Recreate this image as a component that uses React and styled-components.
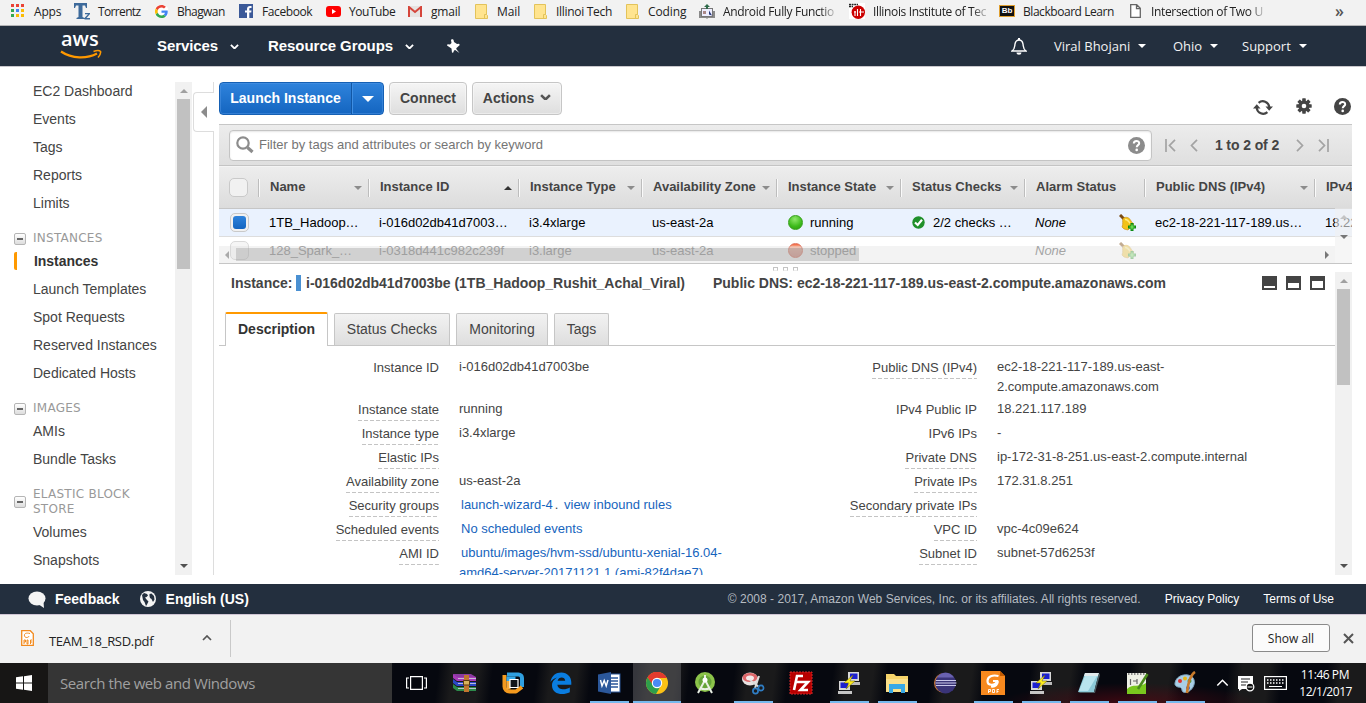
import React from 'react';
import styled, { createGlobalStyle, css } from 'styled-components';

const Global = createGlobalStyle`
  * { box-sizing: border-box; }
  body { margin: 0; background: #fff; overflow: hidden; }
  svg { display: block; flex: none; }
`;
const sans = css`font-family: "Liberation Sans", Arial, sans-serif;`;
const segoe = css`font-family: "Open Sans", "Noto Sans", sans-serif;`;

const Page = styled.div`
  ${sans}
  width: 1366px; height: 703px; display: flex; flex-direction: column;
  color: #444; background: #fff; overflow: hidden; white-space: nowrap;
`;

/* ---------- bookmarks ---------- */
const Bookmarks = styled.div`
  ${segoe}
  height: 26px; flex: none; display: flex; padding-left: 9px;
  background: #f2f2f2; border-bottom: 1px solid #b4b4b6;
  font-size: 12px; color: #222;
`;
const Bookmark = styled.div`
  width: ${p => p.$w}px; height: 22px; flex: none; display: flex; align-items: center; gap: 7px;
  letter-spacing: ${p => p.$ls || 0}px;
`;
const BmIcon = styled.span`width: 18px; flex: none; display: flex; justify-content: center;`;
const BmText = styled.span`
  ${p => p.$fade && css`mask-image: linear-gradient(90deg, #000 88%, rgba(0,0,0,.25));`}
`;
const More = styled.span`margin-left: auto; margin-right: 22px; line-height: 22px; font-size: 16px; font-weight: 600; color: #555;`;
const BbLogo = styled.span`
  width: 16px; height: 12px; background: #111; border: 1px solid #e0a030; color: #fff;
  font: bold 8px/10px "Liberation Sans", sans-serif; text-align: center; letter-spacing: 0;
`;

/* ---------- AWS navigation ---------- */
const Nav = styled.header`
  height: 41px; flex: none; display: flex; align-items: center; background: #232f3e;
  border-bottom: 1px solid #c9c7cc; color: #fff; padding-left: 60px;
`;
const Logo = styled.div`
  ${segoe}
  width: 97px; height: 40px; padding-top: 3px; font-size: 20px; line-height: 20px; font-weight: 600;
  letter-spacing: 0;
  span { display: block; padding-left: 1px; height: 20px; }
`;
const NavMain = styled.div`
  display: flex; align-items: center; gap: ${p => p.$gap || 12}px; width: ${p => p.$w}px; padding-bottom: 2px;
  font-size: 15px; font-weight: bold; letter-spacing: ${p => p.$ls || 0}px;
  svg { margin-top: 3px; }
`;
const NavSide = styled.div`
  ${segoe}
  display: flex; align-items: center; gap: 8px; width: ${p => p.$w}px;
  font-size: 13px; font-weight: 500; color: #f2f2f2; letter-spacing: ${p => p.$ls || 0}px;
`;
const Caret = styled.i`
  width: 0; height: 0; flex: none; border: ${p => p.$s || 4}px solid transparent; border-bottom: 0;
  border-top-color: ${p => p.$c || '#fff'};
  ${p => p.$up && css`transform: rotate(180deg);`}
`;
const Spacer = styled.div`flex: 1;`;

/* ---------- body ---------- */
const Body = styled.main`height: 517px; flex: none; display: flex; padding: 15px 0 9px;`;
const Sidebar = styled.nav`width: 175px; height: 493px; overflow: hidden; flex: none;`;
const Item = styled.div`
  height: 18px; line-height: 18px; margin-bottom: 10px; padding-left: 33px; font-size: 14px;
  ${p => p.$on && css`
    font-weight: bold; padding-left: 17px; margin-left: 14px; border-left: 3px solid #f90;
    border-radius: 2px 0 0 2px; color: #333; letter-spacing: -0.05px;
  `}
`;
const Section = styled.div`
  display: flex; align-items: center; gap: 7px; padding: 9px 0 6px 14px;
  font: 12px/15px "DejaVu Sans", Verdana, sans-serif; color: #999; white-space: pre-line;
  letter-spacing: 0.25px;
`;
const Minus = styled.i`
  width: 12px; height: 12px; flex: none; border: 1px solid #b5b5b5; border-radius: 2px;
  background: linear-gradient(#666, #666) center / 6px 2px no-repeat, linear-gradient(#fff, #ddd);
`;
const Track = styled.div`
  width: 17px; flex: none; height: ${p => p.$h}px; background: #f1f1f1;
  display: flex; flex-direction: column; align-items: center; justify-content: space-between;
  padding: 7px 0;
`;
const Thumb = styled.div`width: 13px; height: ${p => p.$h}px; background: #c1c1c1; margin: 6px 0 auto;`;
const Divider = styled.div`
  width: 22px; height: 493px; flex: none; display: flex; flex-direction: column; align-items: flex-end;
`;
const Line = styled.div`width: 1px; height: ${p => p.$h}px; background: #ddd;`;
const Handle = styled.div`
  width: 21px; height: 40px; border: 1px solid #ddd; border-right: 0; border-radius: 4px 0 0 4px;
  display: flex; align-items: center; padding-left: 7px;
`;
const LeftTri = styled.i`border: 6px solid transparent; border-right-color: #8c8c8c; border-left: 0;`;

const Main = styled.section`width: 1133px; margin-left: 5px; height: 493px; flex: none; display: flex; flex-direction: column;`;
const Toolbar = styled.div`height: 42px; flex: none; display: flex; align-items: flex-start;`;
const Split = styled.div`
  height: 33px; width: 165px; display: flex; border: 1px solid #1560b4; border-radius: 4px; margin-right: 5px;
  background: linear-gradient(#2f83dc, #1465c0); color: #fff; font-weight: bold; font-size: 14px;
  box-shadow: inset 0 0 0 1px rgba(80,150,230,.5);
`;
const SplitText = styled.span`width: 132px; line-height: 31px; text-align: center; border-right: 1px solid #1257a5;`;
const SplitArrow = styled.span`
  flex: 1; display: flex; align-items: center; justify-content: center; border-left: 1px solid #3f8ee2;
`;
const Button = styled.button`
  ${sans}
  height: 33px; width: ${p => p.$w}px; margin-right: 5px; padding: 0 0 1px; border: 1px solid #c6c6c6; border-radius: 4px;
  background: linear-gradient(#f5f5f5, #dedede); color: #444; font-weight: bold; font-size: 14px;
  box-shadow: inset 0 0 0 1px rgba(255,255,255,.4);
  display: flex; align-items: center; justify-content: center; gap: 6px;
  svg { margin-top: -2px; }
`;
const Tools = styled.div`
  margin-left: auto; margin-right: 1px; display: flex; align-items: flex-start; gap: 22px; padding-top: 16px;
  svg:first-child { margin: 1px 1px 0 0; }
`;

const FilterBar = styled.div`
  height: 42px; flex: none; border-top: 1px solid #c6c6c6; border-bottom: 1px solid #c4c4c4;
  background: linear-gradient(#ececec, #dfdfdf); display: flex; align-items: center; padding-left: 10px;
`;
const Search = styled.div`
  width: 923px; height: 31px; background: #fff; border: 1px solid #c4c4c4; border-radius: 4px;
  display: flex; align-items: center; padding: 0 6px; gap: 5px; font-size: 13px; color: #757575;
  box-shadow: inset 0 1px 2px rgba(0,0,0,.1);
`;
const SearchText = styled.span`padding-bottom: 2px;`;
const Pager = styled.div`
  display: flex; align-items: center; margin-left: 13px; font-size: 14px; font-weight: bold;
  span { width: 66px; text-align: center; margin: 0 16px; letter-spacing: -0.1px; }
`;
const PagerGap = styled.i`width: 14px;`;

const TableBox = styled.div`height: 98px; flex: none; position: relative; overflow: hidden; border-bottom: 1px solid #c6c6c6;`;
const Row = styled.div`
  display: grid; grid-template-columns: 39px 110px 150px 123px 135px 124px 124px 120px 170px 90px;
  align-items: center; height: ${p => p.$h}px; font-size: 13px;
`;
const Head = styled(Row)`
  background: linear-gradient(#ededed, #dcdcdc); border-top: 1px solid #f4f4f4; border-bottom: 1px solid #c6c6c6;
  font-weight: bold; color: #444;
`;
const Th = styled.div`
  height: 18px; border-left: 1px solid #bdbdbd; box-shadow: inset 1px 0 #fafafa; padding: 0 6px 0 11px;
  display: flex; align-items: center; justify-content: space-between;
  span { height: 18px; line-height: 16px; }
`;
const DataRow = styled(Row)`
  color: ${p => (p.$faded ? '#8e8e8e' : '#000')}; background: ${p => (p.$faded ? '#fff' : '#eaf2fe')};
  border-bottom: 1px solid #ddd;
`;
const Td = styled.div`padding-left: 11px; display: flex; align-items: center; gap: 8px;`;
const IconTd = styled(Td)`padding-left: 12px; gap: ${p => p.$gap || 7}px;`;
const AlarmTd = styled(Td)`justify-content: space-between; padding-right: 8px; font-style: italic;`;
const Check = styled.i`
  width: 19px; height: 19px; margin-left: ${p => p.$ml || 10}px; border: 1px solid #c9c9c9; border-radius: 5px;
  background: #f1f1f1; display: block; padding: 2px; opacity: ${p => (p.$faded ? 0.7 : 1)};
  &::before {
    content: ''; display: ${p => (p.$on ? 'block' : 'none')}; width: 13px; height: 13px; border-radius: 3px;
    background: linear-gradient(#2f83dc, #1465c0);
  }
`;
const Orb = styled.i`
  width: 15px; height: 15px; border-radius: 50%; flex: none;
  background: ${p => (p.$red ? 'linear-gradient(#f4643c, #fbc0a8 25%, #e9a898 35%, #df9082)' : 'radial-gradient(circle at 45% 25%, #8fe86a, #3cba1a 60%, #2a9a10)')};
  border: 1px solid ${p => (p.$red ? '#e0705a' : '#35a019')};
`;
const HScroll = styled.div`
  position: absolute; left: 0; bottom: 0; width: 1116px; height: 17px; background: rgba(215,215,215,.3);
  display: flex; align-items: center; padding: 0 6px;
`;
const HThumb = styled.div`width: 623px; height: 13px; background: rgba(150,150,150,.36); margin: 0 auto 0 7px;`;
const SideTri = styled.i`
  border: 4px solid transparent; ${p => (p.$right
    ? css`border-left-color: #777; border-right: 0;`
    : css`border-right-color: #aaa; border-left: 0;`)}
`;
const VScroll = styled.div`
  position: absolute; right: 0; bottom: 0; width: 17px; height: 55px; background: rgba(240,240,240,.6);
  display: flex; flex-direction: column; align-items: center; justify-content: space-between; padding: 7px 0 24px;
`;
const Grip = styled.div`
  height: 8px; flex: none; display: flex; justify-content: center; gap: 5px; padding-top: 3px;
  i { width: 5px; height: 4px; border: 1px solid #c4c4c4; border-bottom-color: #eee; }
`;
const Detail = styled.div`height: 303px; flex: none; display: flex; overflow: hidden;`;
const DetailMain = styled.div`width: 1116px; flex: none;`;
const Title = styled.div`
  height: 40px; display: flex; align-items: flex-start; padding: 2px 10px 0 12px; font-size: 14px; font-weight: bold;
  line-height: 18px;
`;
const TitleText = styled.span`width: ${p => p.$w}px; letter-spacing: -0.01px;`;
const Flag = styled.i`width: 5px; height: 16px; background: #4a90d2; margin: 1px 5px 0 0;`;
const Panes = styled.div`margin-left: auto; display: flex; gap: 9px; padding-top: 2px;`;
const Pane = styled.i`
  width: 15px; height: 14px; border: 2px solid #444; border-top-width: ${p => p.$t}px; background: #fff;
`;
const Tabs = styled.div`height: 34px; display: flex; align-items: flex-end; border-bottom: 1px solid #c6c6c6; padding-left: 6px; gap: 6px;`;
const Tab = styled.div`
  width: ${p => p.$w}px; height: ${p => (p.$on ? 34 : 32)}px; line-height: 31px; text-align: center; font-size: 14px;
  border: 1px solid #c6c6c6; border-bottom: 0; border-radius: 2px 2px 0 0;
  background: ${p => (p.$on ? '#fff' : 'linear-gradient(#f2f2f2, #dedede)')};
  ${p => p.$on && css`border-top: 2px solid #f90; font-weight: bold; color: #333; margin-bottom: -1px; line-height: 31px;`}
`;
const Grid = styled.div`
  display: grid; grid-template-columns: 220px 318px 220px 1fr; grid-template-rows: 42px repeat(7, 24px);
  padding-top: 10px; font-size: 13px;
`;
const Label = styled.div`
  text-align: right;
  span { display: inline-block; line-height: 24px; height: 23px;
    ${p => !p.$plain && css`background: repeating-linear-gradient(90deg, #c4c4c4 0 4px, transparent 4px 6px) bottom / 100% 1px no-repeat;`} }
`;
const Value = styled.div`line-height: 20px; padding: 1px 0 0 20px; white-space: pre-line;`;
const Link = styled.a`color: #1664bd; padding: 0 2px;`;

/* ---------- footer / downloads / taskbar ---------- */
const Footer = styled.footer`
  height: 31px; flex: none; background: #232f3e; border-bottom: 1px solid #cfc5d4; display: flex; align-items: center;
  padding: 0 32px 0 28px; font-size: 12px; color: #b6bcc2;
  b { color: #fff; font-size: 14px; margin: 0 20px 0 9px; }
  b + svg + b { margin-left: 10px; }
  a { color: #fff; margin-left: 24px; }
`;
const Copyright = styled.span`letter-spacing: 0.02px;`;
const Downloads = styled.div`
  ${segoe}
  height: 48px; flex: none; display: flex; align-items: center; background: #f2f2f2; padding: 0 12px 2px 21px; font-size: 13px; color: #222;
`;
const File = styled.div`
  width: 210px; height: 37px; display: flex; align-items: center; border-right: 1px solid #c9c9c9;
  span { margin: 5px 0 0 15px; width: 153px; letter-spacing: -0.3px; }
`;
const ShowAll = styled.button`
  ${segoe}
  width: 78px; height: 28px; margin-left: auto; margin-right: 13px; border: 1px solid #8a8a8a; border-radius: 3px; padding: 0;
  background: #fbfbfb; font-size: 12px; color: #222;
`;
const Taskbar = styled.div`
  ${segoe}
  height: 40px; flex: none; display: flex; color: #fff;
  background:
    radial-gradient(ellipse 130px 20px at 1130px 40px, rgba(80,8,18,.75), transparent),
    repeating-linear-gradient(97deg, #06080f 0 44px, #1a1a1b 58px 84px, #06080f 98px);
`;
const Start = styled.div`width: 48px; display: flex; align-items: center; justify-content: center; background: #171615;`;
const SearchBox = styled.div`
  width: 344px; background: #353535; color: #a0a0a0; font-size: 15px; line-height: 41px; padding-left: 12px; letter-spacing: -0.42px;
`;
const TaskView = styled.div`width: 49px; display: flex; align-items: center; justify-content: center;`;
const Task = styled.div`
  width: 48px; height: 40px; display: flex; align-items: center; justify-content: center; flex: none;
  background: ${p => (p.$active ? 'rgba(110,110,115,.45)' : 'transparent')};
  ${p => p.$open && css`background-image: linear-gradient(#76b9ed, #76b9ed); background-repeat: no-repeat;
    background-size: ${p.$active ? 48 : 39}px 2px; background-position: 50% 100%;`}
`;
const Tray = styled.div`display: flex; align-items: center; gap: 9px; padding-left: 7px;`;
const Clock = styled.div`
  width: 57px; text-align: right; font-size: 12px; line-height: 17px; letter-spacing: -0.45px; padding-right: 1px;
  span { padding-right: 3px; }
`;
const Glyph = styled.svg`overflow: visible;`;

const Chevron = ({ c = '#fff', s = 10, up, w = 2 }) => (
  <svg width={s} height={s * 0.6} viewBox="0 0 10 6"><path d={up ? 'M1 5 5 1 9 5' : 'M1 1 5 5 9 1'} fill="none" stroke={c} strokeWidth={w} /></svg>
);
const Question = ({ s = 17, c = '#444' }) => (
  <svg width={s} height={s} viewBox="0 0 17 17"><circle cx="8.5" cy="8.5" r="8.5" fill={c} />
    <path d="M5.8 6.4c0-3.3 5.4-3.2 5.4-.2 0 1.9-2.5 2-2.5 4" fill="none" stroke="#fff" strokeWidth="2" /><circle cx="8.7" cy="12.9" r="1.3" fill="#fff" /></svg>
);
const Folder = () => (
  <svg width="13" height="15" viewBox="0 0 13 15"><path d="M.5.5h11v10l1 1v3H.5z" fill="#ffe48f" stroke="#e3c35a" /><path d="M9.5 14v-3.5h2" fill="none" stroke="#e3c35a" /></svg>
);
const AppsIcon = () => (
  <svg width="14" height="14" viewBox="0 0 14 14">
    {['#ea4335', '#ea4335', '#ea4335', '#34a853', '#4285f4', '#fbbc05', '#34a853', '#fbbc05', '#fbbc05'].map((c, i) => (
      <rect key={i} x={(i % 3) * 5} y={Math.floor(i / 3) * 5} width="3" height="3" fill={c} />))}
  </svg>
);
const Torrentz = () => (
  <svg width="17" height="17" viewBox="0 0 17 17"><path d="M0 0h13v5h-1l-1-2.500H8.500V14l2 1v1H2.500v-1l2-1V2.500H2L1 5H0zM11 10h5v1l-3.500 4H16v1.500h-5.500V15l3.500-3.700H11z" fill="#3d6a9b" /></svg>
);
const Google = () => (
  <svg width="13" height="13" viewBox="0 0 48 48"><circle cx="24" cy="24" r="26" fill="#fff" />
    <path fill="#EA4335" d="M24 9.5c3.5 0 6.7 1.2 9.2 3.6l6.9-6.9C35.9 2.4 30.5 0 24 0 14.6 0 6.5 5.4 2.6 13.2l8 6.2C12.400 13.700 17.700 9.500 24 9.500z" />
    <path fill="#4285F4" d="M47 24.500c0-1.600-.2-3.100-.4-4.500H24v9h12.900c-.6 3-2.300 5.500-4.800 7.200l7.700 6C44.400 38 47 31.800 47 24.500z" />
    <path fill="#FBBC05" d="M10.500 28.600a14.500 14.500 0 0 1 0-9.200l-8-6.200a24 24 0 0 0 0 21.600z" />
    <path fill="#34A853" d="M24 48c6.500 0 11.900-2.100 15.900-5.800l-7.700-6c-2.200 1.500-4.900 2.300-8.200 2.300-6.300 0-11.600-4.200-13.500-9.900l-8 6.200C6.500 42.600 14.600 48 24 48z" /></svg>
);
const Facebook = () => (
  <svg width="14" height="14" viewBox="0 0 14 14"><rect width="14" height="14" fill="#3b5998" /><path d="M8 14V8.500h-2v-2h2V5c0-2 1.200-3 3-3h1.500v2H11.300c-.8 0-1 .4-1 1v1.500h2.200l-.3 2h-1.900V14z" fill="#fff" /></svg>
);
const YouTube = () => (
  <svg width="15" height="11" viewBox="0 0 15 11"><rect width="15" height="11" rx="3" fill="#f00" /><path d="M6 3v5l4-2.500z" fill="#fff" /></svg>
);
const Gmail = () => (
  <svg width="14" height="11" viewBox="0 0 14 11"><rect width="14" height="11" fill="#e6e3e1" /><path d="M1 11V1l6 5 6-5v10" fill="none" stroke="#d5453a" strokeWidth="2" /></svg>
);
const Android = () => (
  <svg width="16" height="15" viewBox="0 0 16 15"><path d="M0 7h3v6h10V7h3v7H9l-1 1-1-1H0z" fill="#8a8a8a" /><rect x="2.500" y="4.500" width="11" height="8" fill="#eef" stroke="#777" /><path d="M8 0l3 3H9v2H7V3H5z" fill="#2f6a4a" /><path d="M10 6.500v4l3 1z" fill="#237" /><rect x="4" y="7" width="3" height="3" fill="#a88" /></svg>
);
const Iit = () => (
  <svg width="16" height="16" viewBox="0 0 16 16"><rect width="16" height="16" fill="#fff" /><circle cx="9.300" cy="9.300" r="6.700" fill="#c00" /><path d="M6 8v5M8.500 6v7M11.500 6v7M5 9h2M10 9h5" stroke="#fff" strokeWidth="1.100" /><path d="M0 1.500h9M0 3.500h4" stroke="#222" strokeWidth="1.500" strokeDasharray="2 .6" /></svg>
);
const Doc = () => (
  <svg width="11" height="14" viewBox="0 0 11 14"><path d="M.7.7h6l3.600 3.600v9H.7zM6.500.7v4h4" fill="#fff" stroke="#666" strokeWidth="1.300" /></svg>
);

const bookmarks = [
  [64, 'Apps', <AppsIcon />, -0.2], [79, 'Torrentz', <Torrentz />, -0.65], [85, 'Bhagwan', <Google />, -0.55], [87, 'Facebook', <Facebook />, -0.4],
  [82, 'YouTube', <YouTube />, -0.45], [66, 'gmail', <Gmail />, -0.2], [59, 'Mail', <Folder />, -0.1], [92, 'Illinoi Tech', <Folder />, -0.3],
  [75, 'Coding', <Folder />, -0.1], [150, 'Android Fully Functio', <Android />, -0.33, 1], [150, 'Illinois Institute of Tec', <Iit />, -0.35, 1],
  [128, 'Blackboard Learn', <BbLogo>Bb</BbLogo>, -0.45], [160, 'Intersection of Two U', <Doc />, -0.35, 1],
];

const Magnifier = () => (
  <svg width="18" height="18" viewBox="0 0 18 18"><circle cx="7" cy="7" r="5.700" fill="none" stroke="#8c8c8c" strokeWidth="2.200" /><path d="M11.500 11.500 16.500 16" stroke="#8c8c8c" strokeWidth="3.200" /></svg>
);
const Refresh = () => (
  <svg width="20" height="17" viewBox="0 0 20 17"><path d="M5.600 3.800A6.500 6.500 0 0 1 16.300 8M14.400 13.200A6.500 6.500 0 0 1 3.700 9" fill="none" stroke="#444" strokeWidth="2.200" /><path d="M12.500 7.500h7.500l-3.800 4.200zM0 9.500h7.500L3.800 5.300z" fill="#444" /></svg>
);
const Gear = () => (
  <svg width="16" height="16" viewBox="0 0 16 16">
    {[0, 45, 90, 135].map(a => <rect key={a} x="6.200" y="0.300" width="3.600" height="15.400" rx=".6" fill="#444" transform={`rotate(${a} 8 8)`} />)}
    <circle cx="8" cy="8" r="5.600" fill="#444" /><circle cx="8" cy="8" r="2.300" fill="#fff" /></svg>
);
const AlarmBell = ({ faded }) => (
  <svg width="17" height="17" viewBox="0 0 17 17" opacity={faded ? 0.45 : 1}>
    <path d="M1 1l4 4" stroke="#7a4a10" strokeWidth="3" /><path d="M4 4.500c3-2.500 7-1 8.500 3.500L15 10l-6 6-4-1-2-2c1.500-3 0-6 1-8.500z" fill="#f2c21a" stroke="#c88a10" strokeWidth=".6" />
    <path d="M6 5.500c2 0 4 2 5 4" stroke="#ffe980" strokeWidth="1.500" fill="none" />
    <path d="M11.500 9h3v2.500H17v3h-2.500V17h-3v-2.500H9v-3h2.500z" fill="#0c8a12" /><path d="M13 10.500v5M10.500 13h5" stroke="#7dec5c" strokeWidth="1.200" /></svg>
);
const StatusOk = () => (
  <svg width="13" height="13" viewBox="0 0 13 13"><circle cx="6.500" cy="6.500" r="6.200" fill="#20902a" /><path d="M3 6.500 5.700 9 10 3.800" fill="none" stroke="#fff" strokeWidth="2.200" /></svg>
);
const PageArrow = ({ bar, flip }) => (
  <Glyph width={bar ? 11 : 8} height="13" viewBox={bar ? '0 0 11 13' : '0 0 8 13'} transform={flip ? 'scale(-1 1)' : undefined}>
    <path d={bar ? 'M1 0v13M10 .8 4.500 6.500 10 12.200' : 'M7 .8 1.500 6.500 7 12.200'} fill="none" stroke="#a3a3a3" strokeWidth="1.700" />
  </Glyph>
);

/* taskbar drawings, all on a 24 x 24 canvas */
const App24 = ({ children }) => <svg width="24" height="24" viewBox="0 0 24 24">{children}</svg>;
const WinRar = <App24><path d="M0 3h18l5 3v3H4z" fill="#8c3aa0" /><path d="M0 3l4 3h19v4H4L0 7z" fill="#a83ab8" /><path d="M0 8l4 3h19v4H4L0 12z" fill="#2b48c8" /><path d="M0 13l4 3h19v4H4L0 17z" fill="#2c8a4a" /><path d="M5 7.500h18M5 12.500h18M5 17.500h18" stroke="#c9c9d8" strokeWidth=".9" /><path d="M11 4h5v17h-5z" fill="#c2762e" /><path d="M10.500 9.500h6v4.500h-6z" fill="#d9b25a" stroke="#5b3a10" /></App24>;
const VmWare = <App24><path d="M6 3.500h11.500a3.500 3.500 0 0 1 3.500 3.500V16" fill="none" stroke="#2f9fe0" strokeWidth="4" /><path d="M3.500 4v11.500a5 5 0 0 0 5 5H15l6-4.500" fill="none" stroke="#f49a1e" strokeWidth="4" strokeLinejoin="round" /><path d="M5.500 5.500h9v5h-9z" fill="#35a8e8" /><path d="M5.500 10h4v8.500h-4z" fill="#f7ab3c" /><path d="M9 8.500h8v8H9z" fill="#11141b" stroke="#fff" strokeWidth="1.200" /></App24>;
const Edge = <App24><path d="M1.500 11C2.500 4.500 7 1.500 12.300 1.500c6 0 10 4.400 10 10v2.300H8.400c.3 5.200 7.800 5.700 12.400 2.800v4.600C14 24.700 3 23.500 3 14.500c0-4 2.500-6.500 5.500-8C6 7 3.200 8.500 1.500 11zM8.600 9.800h7.600c0-4.500-6.800-4.500-7.600 0z" fill="#0a7de0" /></App24>;
const Word = <App24><rect x="11" y="3" width="12" height="18" fill="#fff" stroke="#2b579a" /><path d="M14 7h7M14 10h7M14 13h7M14 16h7" stroke="#2b579a" strokeWidth="1.300" /><path d="M1 3.500 14 1v22L1 20.500z" fill="#2b579a" /><path d="M3.500 9l1.500 6L7.200 9.500l2 5.500L11 9" fill="none" stroke="#fff" strokeWidth="1.400" /></App24>;
const Chrome = <App24><circle cx="12" cy="12" r="11" fill="#fbc116" /><path d="M12 12 2.500 6.500A11 11 0 0 1 21.500 6.500H12z" fill="#e33b2e" /><path d="M12 1A11 11 0 0 0 2.500 6.500L7.500 15 12 7h9.800A11 11 0 0 0 12 1z" fill="#e33b2e" /><path d="M2.500 6.500A11 11 0 0 0 11 23l5-8.500-7 1z" fill="#2e9e4b" /><circle cx="12" cy="12" r="5.200" fill="#fff" /><circle cx="12" cy="12" r="4.100" fill="#4a8af4" /></App24>;
const Studio = <App24><circle cx="12" cy="11" r="10" fill="#8bc34a" /><circle cx="12" cy="11" r="6.500" fill="#64a338" /><path d="M12 4v4M12 9 5 22M12 9l7 13M7 17q5 2.500 10 0" fill="none" stroke="#e8efe4" strokeWidth="2" /><circle cx="12" cy="9" r="2.500" fill="#fff" /></App24>;
const Snip = <App24><ellipse cx="9" cy="8" rx="8" ry="6.500" fill="#e8e2e2" /><ellipse cx="9" cy="6.500" rx="7.500" ry="4.500" fill="#d9484c" opacity=".8" /><ellipse cx="9" cy="7" rx="4" ry="2.500" fill="#f3e9e9" /><path d="M9 9l9 7M18 5l-4 12" stroke="#dcdcdc" strokeWidth="2" /><circle cx="20" cy="17" r="2.600" fill="none" stroke="#2f7dc4" strokeWidth="1.700" /><circle cx="14.500" cy="20" r="2.600" fill="none" stroke="#2f7dc4" strokeWidth="1.700" /></App24>;
const FileZilla = <App24><rect x="1" y="1" width="22" height="22" fill="#b80000" stroke="#cf2a2a" strokeDasharray="2 1" /><path d="M14 5H8L5 19M6.500 11H12M12 11h7l-7.500 8H19" fill="none" stroke="#fff" strokeWidth="2.600" /></App24>;
const Putty = <App24><rect x="11" y="1" width="11" height="9" fill="#d8d8d8" /><rect x="13" y="2.500" width="7.500" height="5.500" fill="#1b1fd0" /><path d="M10 11h13v3H10z" fill="#bbb" /><rect x="2" y="10" width="11" height="9" fill="#d8d8d8" /><rect x="3.500" y="11.500" width="7.500" height="5.500" fill="#1b1fd0" /><path d="M1 20h14v3H1z" fill="#c6c6c6" /><path d="M16 4 7 12h5l-3 6 9-8h-5z" fill="#ffee20" stroke="#6a6000" strokeWidth=".5" /></App24>;
const Explorer = <App24><path d="M1 3h8l2 2h12v16H1z" fill="#f5d36a" /><path d="M1 8h22v13H1z" fill="#fbe08a" /><path d="M4 22v-9h16v9h-4v-4H8v4z" fill="#39a9e6" /></App24>;
const Eclipse = <App24><circle cx="11" cy="12" r="10" fill="#c9783a" /><circle cx="12.600" cy="12" r="10.400" fill="#3a3478" /><path d="M4 6.500a10 10 0 0 1 17 0z" fill="#6a62b0" /><path d="M3 9.500h20M2.500 12h21M3 14.500h20" stroke="#c9c7ea" strokeWidth="1.200" /></App24>;
const Foxit = <App24><path d="M0 0h19l5 5v19H0z" fill="#f7891e" /><path d="M19 0v5h5z" fill="#c25a00" /><path d="M17.500 5c-6-1.500-11 .5-11 5 0 5 8 5 9.500 0h-4M17 10c-1 5-4 6-7 5.500" fill="none" stroke="#fff" strokeWidth="2.200" /><path d="M7.500 22v-3.500h2v2h-2M11.500 18.500v3h2v-3zM16 22v-3.500h2M16 20.500h1.500" fill="none" stroke="#fff" strokeWidth=".9" /></App24>;
const Notepad = <App24><path d="M8 2h14l-5 19H1z" fill="#8cc9d8" /><path d="M8 2h14l-1 3H7z" fill="#dfe9ec" /><path d="M8 5h12L11 20H2z" fill="#b8e4ee" /><path d="M22 2l1 2-5 18H3l-2-1h16z" fill="#4a5a60" /></App24>;
const NotepadPP = <App24><path d="M2 2h19v21H2z" fill="#eef0e6" /><path d="M2 18c6-6 12-1 19-6v11H2z" fill="#79c81e" /><path d="M3 3h17" stroke="#8a8a8a" strokeWidth="2" strokeDasharray="1.500 1.500" /><path d="M5.500 8v6M8 10h4M12 8v5" stroke="#666" strokeWidth="1.200" /><path d="M22.500 3 13 18" stroke="#4a8a1c" strokeWidth="2.600" /></App24>;
const Paint = <App24><path d="M2 12C3 6 9 3 15 4c6 1 8 7 5 12-3 6-11 7-11 3 0-2-2-3-4-3-2-.5-3.500-2-3-4z" fill="#a9cfe6" stroke="#7fa6c0" /><circle cx="7" cy="10" r="2" fill="#d33" /><circle cx="12" cy="7.500" r="2" fill="#e8b81c" /><circle cx="16.500" cy="10" r="2" fill="#3a9a3a" /><circle cx="15" cy="17" r="2" fill="#3a62c8" /><path d="M22 1C17 4 15 13 14 22" stroke="#c87a2a" strokeWidth="2.600" fill="none" /></App24>;

const tasks = [[WinRar], [VmWare], [Edge], [Word, 1], [Chrome, 1, 1], [Studio], [Snip, 1], [FileZilla], [Putty, 1], [Explorer, 1],
  [Eclipse], [Foxit, 1], [Putty, 1], [Notepad, 1], [NotepadPP, 1], [Paint, 1]];

const sidebar = [
  ['i', 'EC2 Dashboard'], ['i', 'Events'], ['i', 'Tags'], ['i', 'Reports'], ['i', 'Limits'], ['s', 'INSTANCES'],
  ['i', 'Instances', true], ['i', 'Launch Templates'], ['i', 'Spot Requests'], ['i', 'Reserved Instances'], ['i', 'Dedicated Hosts'],
  ['s', 'IMAGES'], ['i', 'AMIs'], ['i', 'Bundle Tasks'], ['s', 'ELASTIC BLOCK\nSTORE'], ['i', 'Volumes'], ['i', 'Snapshots'],
];
const columns = [['Name', 1], ['Instance ID', 2], ['Instance Type', 1], ['Availability Zone', 1], ['Instance State', 1],
  ['Status Checks', 1], ['Alarm Status', 0], ['Public DNS (IPv4)', 1], ['IPv4', 0]];

const details = [
  ['Instance ID', 'i-016d02db41d7003be', 'Public DNS (IPv4)', 'ec2-18-221-117-189.us-east-\n2.compute.amazonaws.com', 1, 0],
  ['Instance state', 'running', 'IPv4 Public IP', '18.221.117.189', 0, 1],
  ['Instance type', 'i3.4xlarge', 'IPv6 IPs', '-', 0, 1],
  ['Elastic IPs', '', 'Private DNS', 'ip-172-31-8-251.us-east-2.compute.internal'],
  ['Availability zone', 'us-east-2a', 'Private IPs', '172.31.8.251'],
  ['Security groups', <><Link>launch-wizard-4</Link>. <Link>view inbound rules</Link></>, 'Secondary private IPs', ''],
  ['Scheduled events', <Link>No scheduled events</Link>, 'VPC ID', 'vpc-4c09e624'],
  ['AMI ID', <Link>{'ubuntu/images/hvm-ssd/ubuntu-xenial-16.04-\namd64-server-20171121.1 (ami-82f4dae7)'}</Link>, 'Subnet ID', 'subnet-57d6253f'],
];

export default function App() {
  return (
    <Page>
      <Global />
      <Bookmarks>
        {bookmarks.map(([w, t, icon, ls, fade]) => (
          <Bookmark key={t} $w={w} $ls={ls}><BmIcon>{icon}</BmIcon><BmText $fade={fade}>{t}</BmText></Bookmark>
        ))}
        <More>»</More>
      </Bookmarks>

      <Nav>
        <Logo>
          <span>aws</span>
          <svg width="42" height="12" viewBox="0 0 42 12"><path d="M1 2.500c11 7.500 26 7.500 36 2" fill="none" stroke="#f90" strokeWidth="2.200" /><path d="M33.500 2.500c3-1.200 6-1.200 7 0 .5 1.500-.8 4-2.500 6" fill="none" stroke="#f90" strokeWidth="1.600" /></svg>
        </Logo>
        <NavMain $w={111} $ls={-0.1}>Services<Chevron s={9} /></NavMain>
        <NavMain $w={179} $ls={-0.05}>Resource Groups<Chevron s={9} /></NavMain>
        <svg width="13" height="14" viewBox="0 0 13 14"><path d="M5 0l1.500.8L7 3l3 2 2-.2.800 1.200L9.500 9l-.3 1 3.300 4-4.300-3-1.200.6-.7 2-1.300.2L4.500 9.500 0 6.500l.5-1.300 2.500.3L4.500 4 4 1z" fill="#fff" /></svg>
        <Spacer />
        <NavSide $w={43}>
          <svg width="16" height="17" viewBox="0 0 16 17"><path d="M1 13c3-2 2.500-4 3-7 .4-2.400 2-4 4-4s3.600 1.600 4 4c.5 3 0 5 3 7z" fill="none" stroke="#fff" strokeWidth="1.400" /><path d="M5.500 14.500a2.500 2.300 0 0 0 5 0zM7 0h2v2H7z" fill="#fff" /></svg>
        </NavSide>
        <NavSide $w={119}>Viral Bhojani<Caret /></NavSide>
        <NavSide $w={69}>Ohio<Caret /></NavSide>
        <NavSide $w={124}>Support<Caret /></NavSide>
      </Nav>

      <Body>
        <Sidebar>
          {sidebar.map(([k, t, on]) => k === 'i'
            ? <Item key={t} $on={on}>{t}</Item>
            : <Section key={t}><Minus />{t}</Section>)}
        </Sidebar>
        <Track $h={493}><Caret $up $c="#a0a0a0" /><Thumb $h={170} /><Caret $c="#505050" /></Track>
        <Divider>
          <Line $h={10} /><Handle><LeftTri /></Handle><Line $h={443} />
        </Divider>

        <Main>
          <Toolbar>
            <Split><SplitText>Launch Instance</SplitText><SplitArrow><Caret $s={6} /></SplitArrow></Split>
            <Button $w={78}>Connect</Button>
            <Button $w={90}>Actions<Chevron c="#555" s={11} w={2.300} /></Button>
            <Tools><Refresh /><Gear /><Question /></Tools>
          </Toolbar>
          <FilterBar>
            <Search><Magnifier /><SearchText>Filter by tags and attributes or search by keyword</SearchText><Spacer /><Question c="#8c8c8c" /></Search>
            <Pager><PageArrow bar /><PagerGap /><PageArrow /><span>1 to 2 of 2</span><PageArrow flip /><PagerGap /><PageArrow bar flip /></Pager>
          </FilterBar>
          <TableBox>
            <Head $h={43}>
              <Check />
              {columns.map(([t, a]) => <Th key={t}><span>{t}</span>{a > 0 && <Caret $up={a === 2} $c={a === 2 ? '#333' : '#8c8c8c'} />}</Th>)}
            </Head>
            <DataRow $h={28}>
              <Check $on $ml={11} />
              <Td>1TB_Hadoop…</Td><Td>i-016d02db41d7003…</Td><Td>i3.4xlarge</Td><Td>us-east-2a</Td>
              <IconTd><Orb />running</IconTd><IconTd $gap={8}><StatusOk />2/2 checks …</IconTd>
              <AlarmTd>None<AlarmBell /></AlarmTd><Td>ec2-18-221-117-189.us…</Td><Td>18.221.117.189</Td>
            </DataRow>
            <DataRow $h={28} $faded>
              <Check $ml={11} $faded />
              <Td>128_Spark_…</Td><Td>i-0318d441c982c239f</Td><Td>i3.large</Td><Td>us-east-2a</Td>
              <IconTd><Orb $red />stopped</IconTd><Td />
              <AlarmTd>None<AlarmBell faded /></AlarmTd><Td /><Td />
            </DataRow>
            <HScroll><SideTri /><HThumb /><SideTri $right /></HScroll>
            <VScroll><Caret $up $c="#c4c4c4" /><Caret $c="#777" /></VScroll>
          </TableBox>
          <Grip><i /><i /><i /></Grip>
          <Detail>
            <DetailMain>
              <Title>
                <TitleText $w={65}>Instance:</TitleText><Flag />
                <TitleText $w={407}>i-016d02db41d7003be (1TB_Hadoop_Rushit_Achal_Viral)</TitleText>
                <TitleText>Public DNS: ec2-18-221-117-189.us-east-2.compute.amazonaws.com</TitleText>
                <Panes><Pane $t={10} /><Pane $t={7} /><Pane $t={5} /></Panes>
              </Title>
              <Tabs>
                <Tab $on $w={103}>Description</Tab><Tab $w={116}>Status Checks</Tab><Tab $w={92}>Monitoring</Tab><Tab $w={55}>Tags</Tab>
              </Tabs>
              <Grid>
                {details.map(([a, b, c, d, pa, pc]) => (
                  <React.Fragment key={a}>
                    <Label $plain={pa}><span>{a}</span></Label><Value>{b}</Value>
                    <Label $plain={pc}><span>{c}</span></Label><Value>{d}</Value>
                  </React.Fragment>
                ))}
              </Grid>
            </DetailMain>
            <Track $h={303}><Caret $up $c="#a0a0a0" /><Thumb $h={96} /><Caret $c="#505050" /></Track>
          </Detail>
        </Main>
      </Body>

      <Footer>
        <svg width="18" height="17" viewBox="0 0 18 17"><ellipse cx="9" cy="7.500" rx="8.500" ry="7" fill="#f4f4f4" /><path d="M10 13l6 4-.5-6z" fill="#f4f4f4" /></svg>
        <b>Feedback</b>
        <svg width="16" height="16" viewBox="0 0 16 16"><circle cx="8" cy="8" r="8" fill="#f4f4f4" /><path d="M2 4l2-2 3 1 1 1.500L6.500 6 5 6.500 7 9l1.500 1.500L7 13.500 6 15 4.500 11 3 9zM9.500 3l2-.5L14 5l.5 3.500-1.500 2.500-1.500-3L10 7l-.5-2z" fill="#232f3e" /></svg>
        <b>English (US)</b>
        <Spacer /><Copyright>© 2008 - 2017, Amazon Web Services, Inc. or its affiliates. All rights reserved.</Copyright><a>Privacy Policy</a><a>Terms of Use</a>
      </Footer>
      <Downloads>
        <File>
          <svg width="13" height="16" viewBox="0 0 13 16"><path d="M.7.7h8.600l3 3v11.600H.7z" fill="#fff" stroke="#f28a1e" strokeWidth="1.300" /><path d="M9 3.500c-4-1-6 0-5.500 2.500.5 2 4 2 4.500 0M3 10v4M3 10h1.500v2H3M6 10v4h1V10zM9.500 14v-4H11M9.500 12H11" fill="none" stroke="#f28a1e" /></svg>
          <span>TEAM_18_RSD.pdf</span>
          <Chevron up c="#555" w={1.700} />
        </File>
        <ShowAll>Show all</ShowAll>
        <svg width="11" height="11" viewBox="0 0 11 11"><path d="M1 1l9 9M10 1l-9 9" stroke="#555" strokeWidth="2" /></svg>
      </Downloads>
      <Taskbar>
        <Start><svg width="16" height="16" viewBox="0 0 16 16"><path d="M0 2.300 7 1.300V7.600H0zM8 1.200 16 0v7.600H8zM0 8.400h7v6.300l-7-1zM8 8.400h8V16l-8-1.200z" fill="#fff" /></svg></Start>
        <SearchBox>Search the web and Windows</SearchBox>
        <TaskView><svg width="21" height="14" viewBox="0 0 21 14"><path d="M4.600.6h11.800v12.800H4.600zM3 2H.6v10H3M18 2h2.400v10H18" fill="none" stroke="#fff" strokeWidth="1.200" /></svg></TaskView>
        {tasks.map(([icon, open, active], i) => <Task key={i} $open={open} $active={active}>{icon}</Task>)}
        <Tray>
          <Chevron up s={13} w={1.200} />
          <svg width="17" height="17" viewBox="0 0 17 17"><path d="M0 1h15v8a5 5 0 0 0-5 5H4l-3 2v-2H0z" fill="#fff" /><path d="M3 4h9M3 7h7M3 10h5" stroke="#222" strokeWidth="1.200" /><circle cx="12" cy="12" r="3.800" fill="#111" stroke="#fff" strokeWidth="1.300" /><path d="M9.500 12h5" stroke="#fff" /></svg>
          <svg width="23" height="14" viewBox="0 0 23 14"><rect x=".6" y=".6" width="21.800" height="12.800" fill="none" stroke="#fff" strokeWidth="1.200" /><path d="M3 4h17M3 7h17" stroke="#fff" strokeWidth="1.500" strokeDasharray="1.500 1.500" /><path d="M5 10.500h13" stroke="#fff" /></svg>
          <Clock><span>11:46 PM</span><br />12/1/2017</Clock>
        </Tray>
      </Taskbar>
    </Page>
  );
}
